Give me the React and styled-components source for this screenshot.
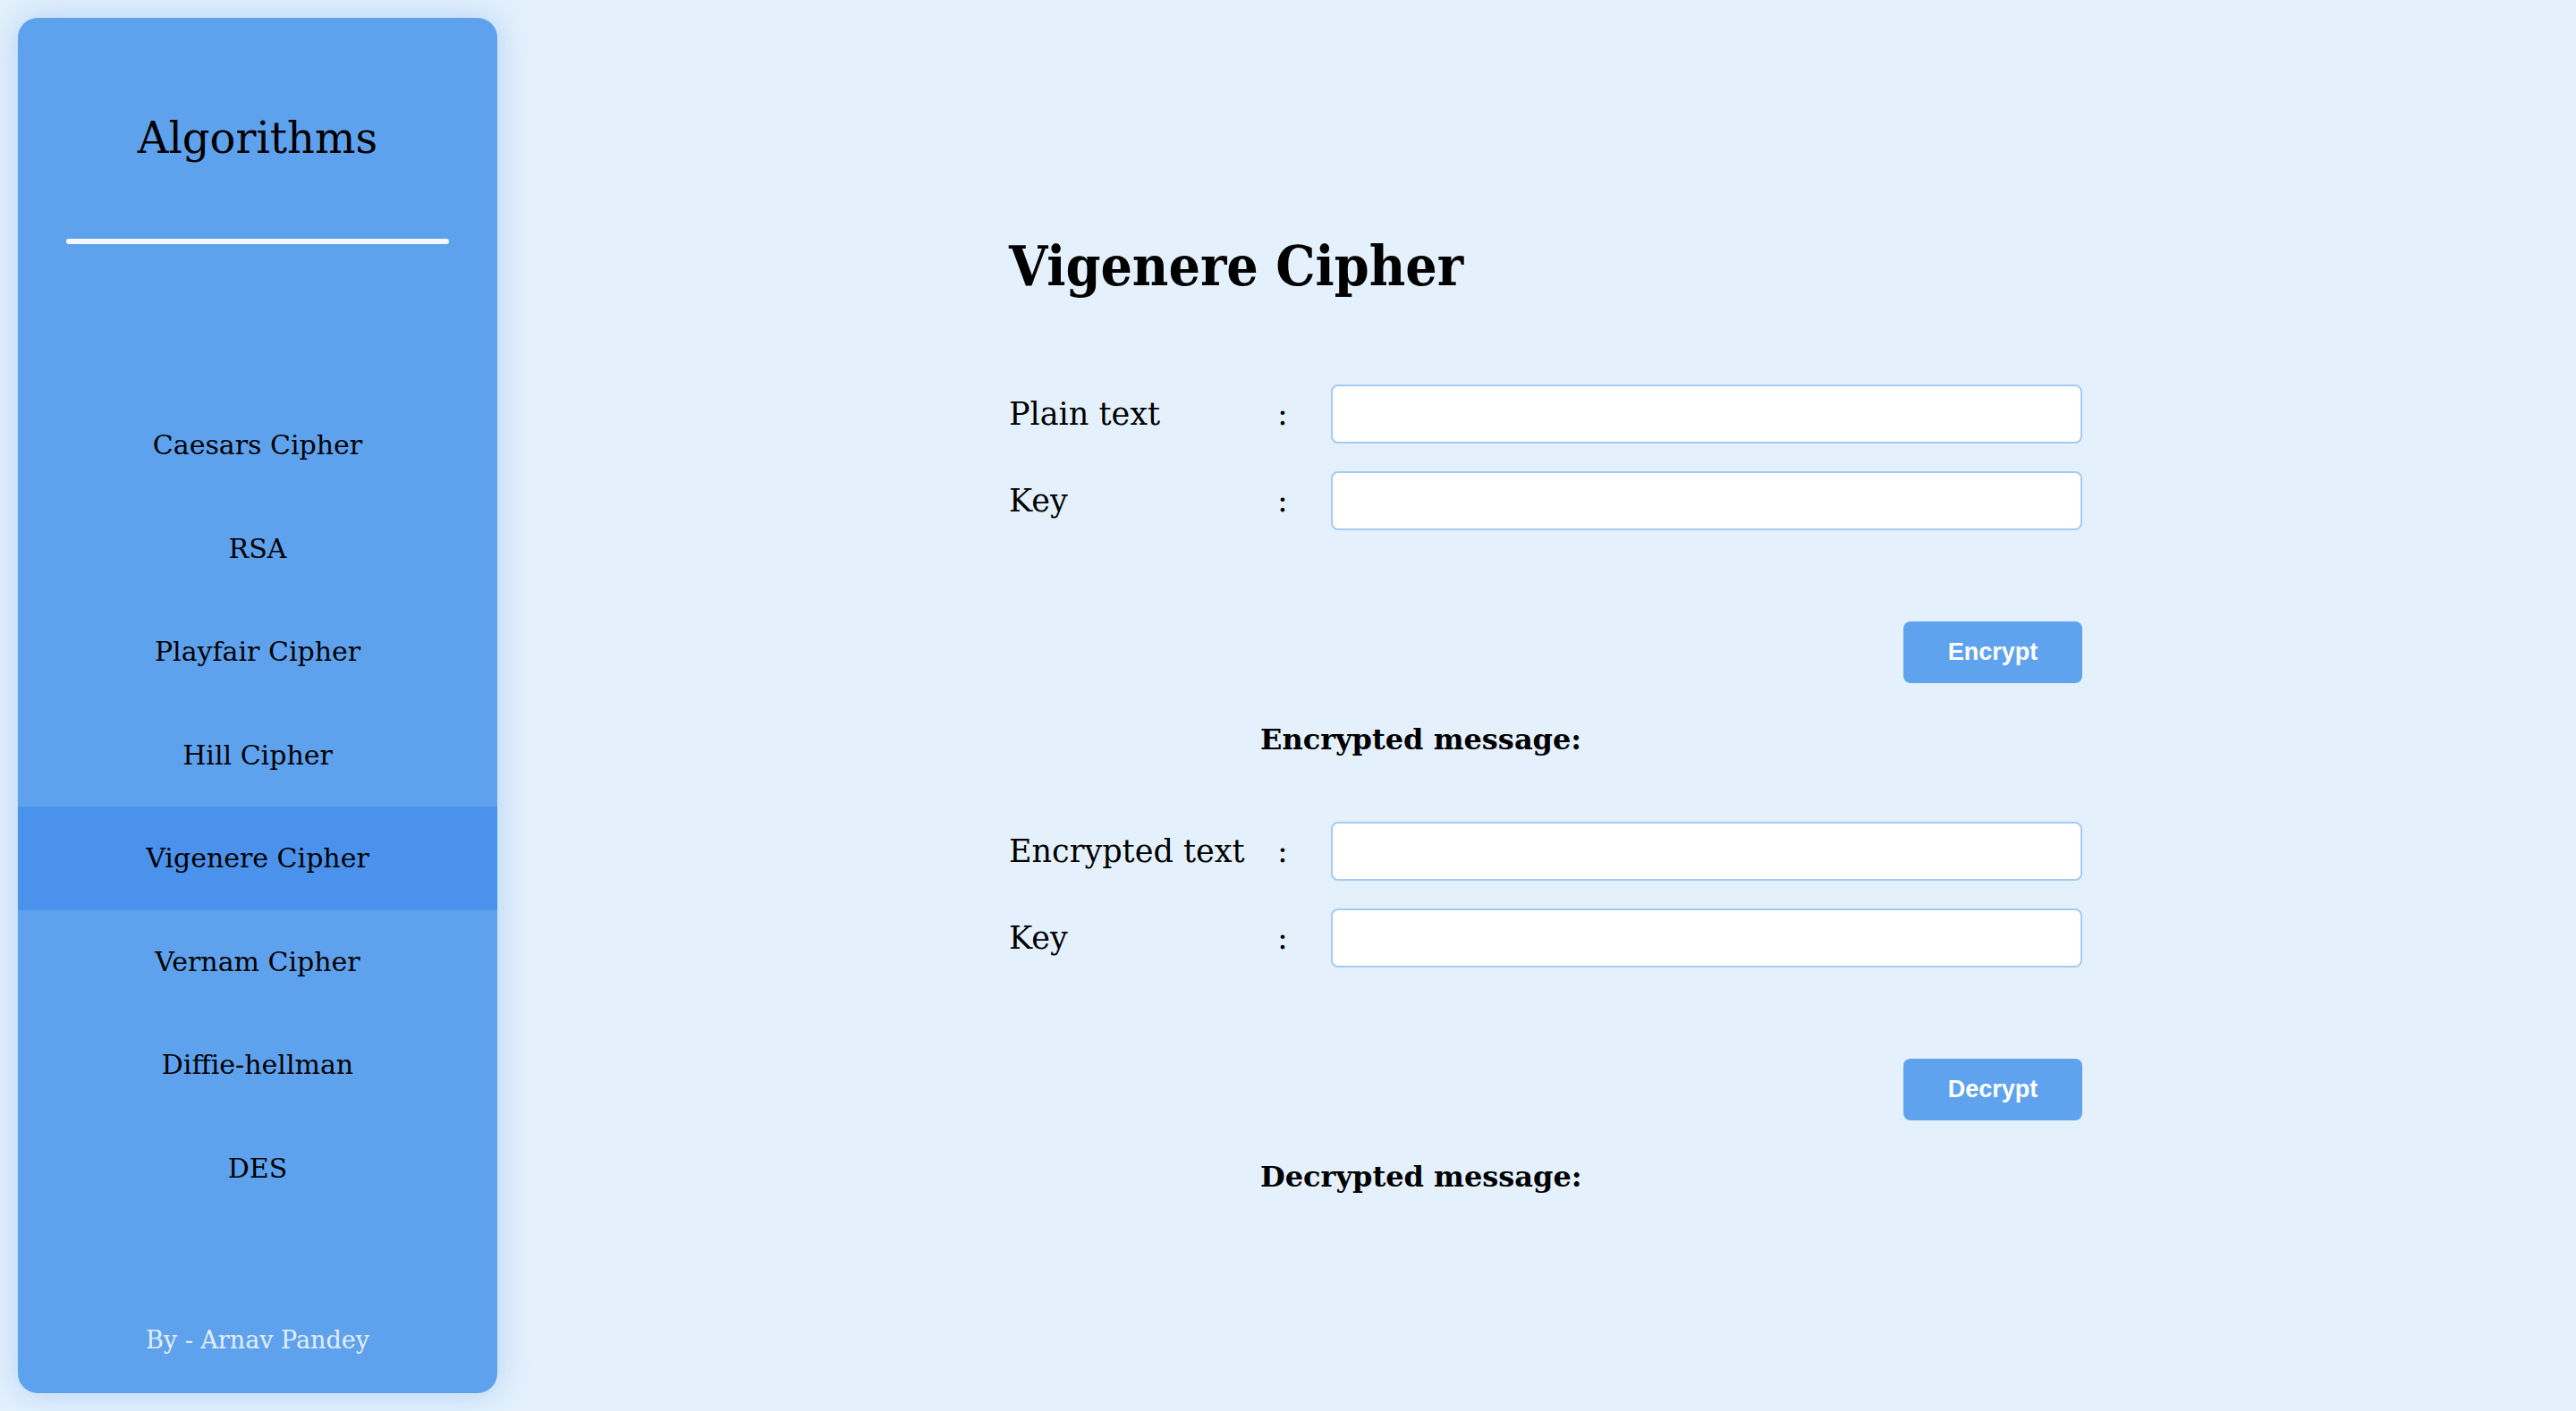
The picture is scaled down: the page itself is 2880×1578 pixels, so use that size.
import React from "react";
import styled, { createGlobalStyle } from "styled-components";

const GlobalStyle = createGlobalStyle`
  html, body {
    margin: 0;
    padding: 0;
    background: #e4f1fc;
    font-family: "DejaVu Serif", serif;
    color: #000;
  }
  * { box-sizing: border-box; }
`;

const Layout = styled.div`
  display: flex;
  height: 100vh;
`;

const Sidebar = styled.aside`
  flex: 0 0 536px;
  margin: 20px;
  background: #5ea2ee;
  border-radius: 22px;
  box-shadow: 0 0 36px rgba(80, 150, 235, 0.35);
  display: flex;
  flex-direction: column;
  align-items: stretch;
  overflow: hidden;
`;

const Brand = styled.h2`
  margin: 105px 0 0;
  font-weight: 400;
  font-size: 48px;
  line-height: 58px;
  text-align: center;
`;

const Divider = styled.div`
  width: 80%;
  height: 6px;
  margin: 84px auto 0;
  border-radius: 3px;
  background: #f4f8fe;
`;

const NavList = styled.nav`
  margin-top: 167px;
  display: flex;
  flex-direction: column;
`;

const NavItem = styled.div`
  height: 115.5px;
  display: flex;
  align-items: center;
  justify-content: center;
  font-size: 30px;
  background: ${(p) => (p.$active ? "#4a92eb" : "transparent")};
`;

const Footer = styled.div`
  margin-top: auto;
  padding-bottom: 41px;
  text-align: center;
  font-size: 27px;
  line-height: 36px;
  color: #e3eefb;
`;

const Main = styled.main`
  flex: 1;
  display: flex;
  justify-content: center;
  padding-top: 263px;
`;

const Column = styled.div`
  width: 1200px;
  display: flex;
  flex-direction: column;
`;

const Title = styled.h1`
  margin: 0 0 97px;
  font-family: "DejaVu Serif Condensed", "DejaVu Serif", serif;
  font-stretch: condensed;
  font-weight: 700;
  font-size: 62px;
  line-height: 70px;
`;

const Fields = styled.div`
  display: flex;
  flex-direction: column;
  gap: 31px;
`;

const Row = styled.div`
  display: grid;
  grid-template-columns: 300px 60px 1fr;
  align-items: center;
  height: 66px;
`;

const Label = styled.label`
  font-size: 35px;
`;

const Colon = styled.span`
  font-size: 35px;
`;

const Input = styled.input`
  height: 66px;
  width: 100%;
  border: 2px solid #a3cbf3;
  border-radius: 8px;
  background: #fff;
  outline: none;
`;

const Actions = styled.div`
  display: flex;
  justify-content: flex-end;
  margin-top: 102px;
`;

const Button = styled.button`
  width: 200px;
  height: 69px;
  border: none;
  border-radius: 8px;
  background: #5fa3ee;
  color: #fff;
  font-family: "Liberation Sans", Arial, sans-serif;
  font-weight: 700;
  font-size: 27px;
  cursor: pointer;
`;

const Result = styled.div`
  margin: 42px 0 0 281px;
  font-weight: 700;
  font-size: 32px;
  line-height: 42px;
`;

const Section = styled.section`
  display: flex;
  flex-direction: column;
  margin-top: ${(p) => p.$top || 0}px;
`;

const algorithms = [
  "Caesars Cipher",
  "RSA",
  "Playfair Cipher",
  "Hill Cipher",
  "Vigenere Cipher",
  "Vernam Cipher",
  "Diffie-hellman",
  "DES",
];

function Field({ label }) {
  return (
    <Row>
      <Label>{label}</Label>
      <Colon>:</Colon>
      <Input type="text" />
    </Row>
  );
}

export default function App() {
  return (
    <>
      <GlobalStyle />
      <Layout>
        <Sidebar>
          <Brand>Algorithms</Brand>
          <Divider />
          <NavList>
            {algorithms.map((a) => (
              <NavItem key={a} $active={a === "Vigenere Cipher"}>
                {a}
              </NavItem>
            ))}
          </NavList>
          <Footer>By - Arnav Pandey</Footer>
        </Sidebar>
        <Main>
          <Column>
            <Title>Vigenere Cipher</Title>
            <Section>
              <Fields>
                <Field label="Plain text" />
                <Field label="Key" />
              </Fields>
              <Actions>
                <Button>Encrypt</Button>
              </Actions>
              <Result>Encrypted message:</Result>
            </Section>
            <Section $top={71}>
              <Fields>
                <Field label="Encrypted text" />
                <Field label="Key" />
              </Fields>
              <Actions>
                <Button>Decrypt</Button>
              </Actions>
              <Result>Decrypted message:</Result>
            </Section>
          </Column>
        </Main>
      </Layout>
    </>
  );
}
